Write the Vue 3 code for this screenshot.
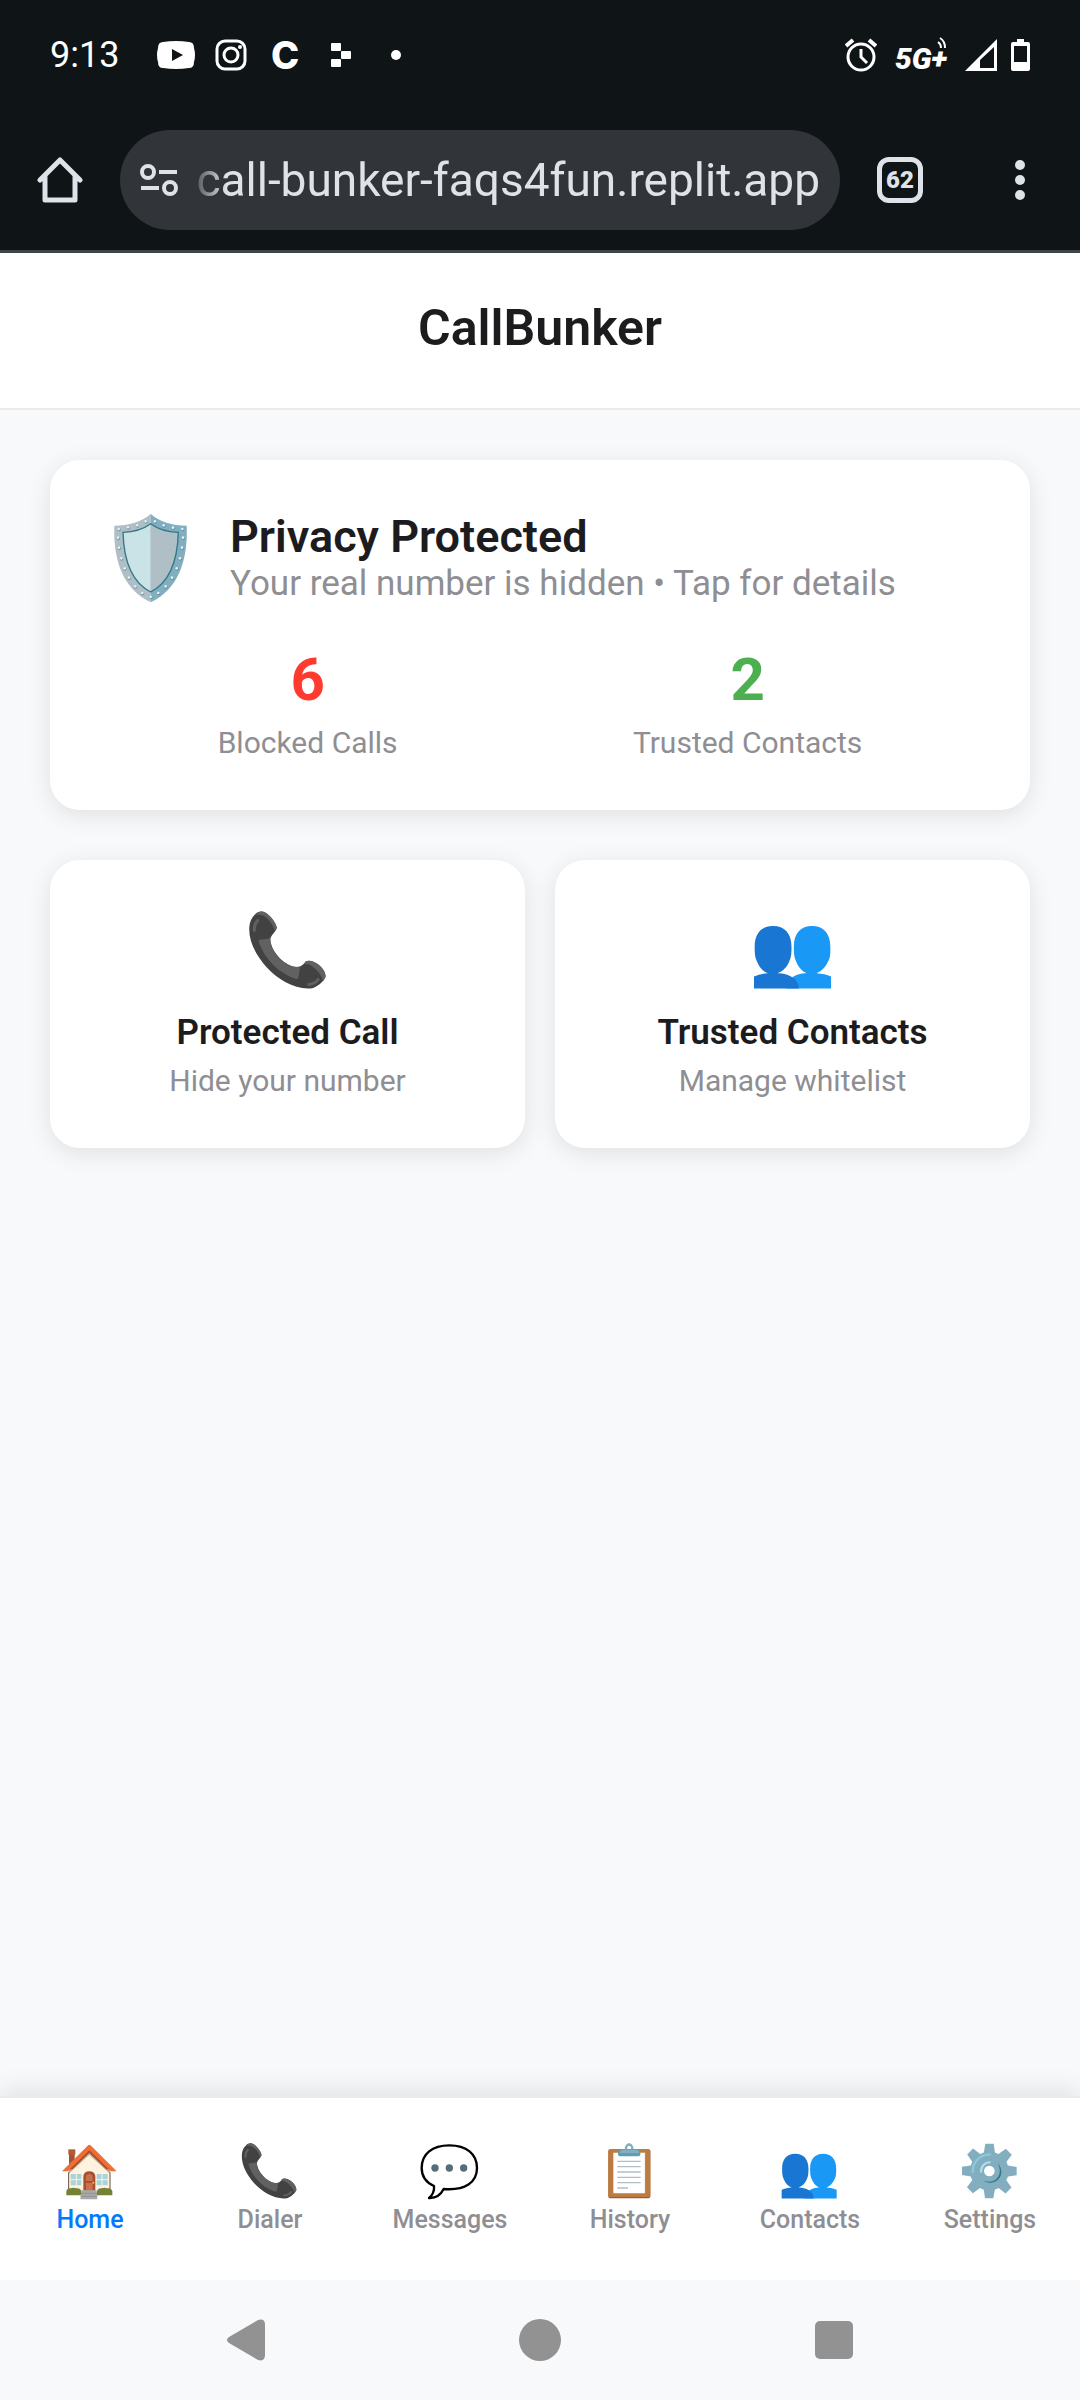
<script setup>
const actions = [
  { icon: 'phone', box: '147 93 232 234', title: 'Protected Call', note: 'Hide your number' },
  { icon: 'people', box: '162 93 232 234', title: 'Trusted Contacts', note: 'Manage whitelist' },
]

const tabs = [
  { icon: 'house', box: '179 182 180 180', label: 'Home', active: true },
  { icon: 'phone', box: '140 84 253 253', label: 'Dialer' },
  { icon: 'bubble', box: '179 182 180 180', label: 'Messages' },
  { icon: 'clipboard', box: '719 182 180 180', label: 'History' },
  { icon: 'people', box: '155 84 253 253', label: 'Contacts' },
  { icon: 'gear', box: '719 182 180 180', label: 'Settings' },
]

const rivets = [
  [195, 120], [170, 132], [142, 138], [114, 143], [112, 169], [115, 199], [122, 231], [132, 261],
  [145, 289], [164, 315], [185, 335], [210, 347], [223, 120], [249, 132], [277, 139], [305, 143],
  [307, 169], [304, 199], [298, 231], [288, 261], [274, 289], [255, 315], [233, 335],
]
</script>

<template>
  <div class="screen">
    <svg class="defs" aria-hidden="true">
      <symbol id="phone" overflow="visible">
        <path fill="#424242" d="M165 103C172 94 184 91 195 97C212 106 228 128 231 143C228 155 213 165 211 178C214 215 250 252 285 262C300 262 308 258 318 245C328 239 340 244 352 251C368 262 380 280 377 293C372 305 352 322 338 325C290 332 235 300 200 262C165 222 145 180 148 140C149 125 155 112 165 103Z" />
        <path fill="#616161" d="M172 99C180 92 190 92 200 99C215 110 229 130 231 143L225 154C221 136 206 114 190 107C184 103 178 104 168 104ZM318 244C330 239 345 246 358 256C372 267 380 282 377 292L370 303C366 285 347 264 332 256C326 252 320 252 312 252ZM175 180C190 176 203 178 211 173C210 215 250 262 302 262C296 275 300 288 293 298C240 285 190 235 175 180Z" />
        <path fill="none" stroke="#616161" stroke-width="9" stroke-linecap="round" d="M163 151C162 139 166 129 173 121M327 314C339 313 349 308 355 299" />
      </symbol>
      <symbol id="people" overflow="visible">
        <path fill="#1a98f5" d="M337 138C371 138 392 160 392 200C392 215 393 232 385 245C378 262 364 275 351 280C367 281 382 284 394 290V326H258C258 297 290 280 320 280C308 275 295 262 289 245C282 232 282 215 282 200C282 160 303 138 337 138Z" />
        <path fill="#1976d2" d="M219 138C254 138 275 160 275 200C275 215 275 232 268 245C262 262 248 275 233 280C265 280 297 296 297 326H162V290C174 284 189 281 204 280C190 275 177 262 171 245C164 232 164 215 164 200C164 160 184 138 219 138Z" />
      </symbol>
      <symbol id="house" overflow="visible">
        <path fill="#a4522f" d="M206 212H223V250L206 262Z" />
        <path fill="#b55a35" d="M204 207H225V223H204Z" />
        <path fill="#fff3e0" d="M267 212L329 272V330H205V272Z" />
        <path fill="#bfa68b" d="M267 209L205 268V280L267 223L329 280V268Z" />
        <path fill="none" stroke="#6d4c41" stroke-width="3" d="M205 276V330M329 276V330" />
        <path fill="#9e4f2e" d="M267 207L205 267H216L267 217L318 267H329Z" />
        <path fill="#f06d33" d="M262 196Q267 191 272 196L349 273H331L267 210L203 273H185Z" />
        <path fill="#a8d3d8" d="M211 281H243V315H211ZM289 281H322V315H289Z" />
        <path fill="none" stroke="#fff3e0" stroke-width="3" d="M228 280V316M210 298H244M305 280V316M288 298H323" />
        <path fill="#a84f32" d="M249 331V287Q251 273 267 273Q283 273 285 287V331Z" />
        <path fill="#c9704e" d="M257 302V289Q258 281 267 281Q276 281 277 289V302ZM257 308H277V329H257Z" />
        <circle cx="279" cy="307" r="3" fill="#fbc02d" />
        <path fill="#748236" d="M198 345V333Q200 323 211 324Q220 321 228 324Q240 322 243 333V345ZM290 345V333Q293 323 304 324Q312 321 321 324Q333 322 336 333V345Z" />
        <path fill="#a9a9a9" d="M243 330H289L291 357H240Z" />
        <path fill="none" stroke="#858585" stroke-width="2" d="M242 339H290M241 348H291" />
      </symbol>
      <symbol id="bubble" overflow="visible">
        <path fill="#fff" stroke="#000" stroke-width="7" stroke-linejoin="round" d="M267 195C318 195 350 220 350 263C350 306 315 331 250 326C243 340 228 354 206 353C216 346 223 331 221 317C196 306 184 288 184 263C184 220 216 195 267 195Z" />
        <g fill="#546e7a"><circle cx="224" cy="263" r="11" /><circle cx="267" cy="263" r="11" /><circle cx="310" cy="263" r="11" /></g>
      </symbol>
      <symbol id="clipboard" overflow="visible">
        <rect x="744" y="207" width="126" height="147" rx="6" fill="#a05a36" />
        <rect x="744" y="207" width="126" height="143" rx="6" fill="#bd7b40" />
        <path fill="#fff" d="M759 217H854V339H759Z" />
        <path fill="none" stroke="#dfe5e8" stroke-width="2" d="M853 217V338" />
        <path fill="none" stroke="#b0bec5" stroke-width="4" d="M771 243H841M771 259H841M771 275H841M771 291H841M771 307H841M771 323H803" />
        <path fill="#82aec0" fill-rule="evenodd" d="M793 209C793 182 820 182 820 209ZM806 197A6 6 0 1 0 807 197Z" />
        <path fill="#5f9db2" d="M773 216Q774 207 785 207H828Q839 207 840 216V223Q839 228 833 228H780Q774 228 773 223Z" />
        <path fill="#82aec0" d="M779 214Q781 208 788 208H826Q834 208 836 214V218H779Z" />
      </symbol>
      <symbol id="gear" overflow="visible">
        <g fill="#82aec0">
          <path v-for="n in 8" :key="n" :transform="`rotate(${n * 45} 807 272)`" d="M789 225L795 190H820L825 225Z" />
        </g>
        <circle cx="807" cy="272" r="37" fill="none" stroke="#82aec0" stroke-width="42" />
        <path fill="none" stroke="#8cc8dc" stroke-width="7" stroke-linecap="round" d="M757 275C757 244 780 222 809 222" />
        <path fill="none" stroke="#b3e1eb" stroke-width="6" stroke-linecap="round" d="M782 274C782 258 793 246 808 246" />
        <path fill="#2f7889" d="M832 249C847 264 847 288 831 300C819 310 800 309 791 301C804 307 820 304 829 295C841 284 841 264 832 249Z" />
      </symbol>
    </svg>

    <header class="device">
      <div class="status">
        <div class="status-left">
          <time class="clock">9:13</time>
          <svg width="38" height="28" viewBox="0 0 38 28"><path fill="#fff" fill-rule="evenodd" d="M6 1Q19-1 32 1Q37 1 37 7Q39 14 37 21Q37 27 32 27Q19 29 6 27Q1 27 1 21Q-1 14 1 7Q1 1 6 1ZM15 8V20L26 14Z" /></svg>
          <svg width="32" height="32" viewBox="0 0 32 32" fill="none" stroke="#fff" stroke-width="3"><rect x="2" y="2" width="28" height="28" rx="8" /><circle cx="16" cy="16" r="7" /><circle cx="25" cy="8" r="2" fill="#fff" stroke="none" /></svg>
          <span class="app-mark">C</span>
          <svg width="20" height="26" viewBox="0 0 20 26" fill="#fff"><rect width="10" height="8" y="1" rx="1" /><rect x="10" y="9" width="10" height="8" rx="1" /><rect y="17" width="10" height="8" rx="1" /></svg>
          <i class="more-dot"></i>
        </div>
        <div class="status-right">
          <svg width="32" height="34" viewBox="0 0 32 34" fill="none" stroke="#fff"><circle cx="16" cy="19" r="13" stroke-width="3" /><path stroke-width="3" d="M16 11V19L22 25" /><path stroke-width="4" d="M1 8L8 2M31 8L24 2" /></svg>
          <span class="network">5G+
            <svg class="waves" width="10" height="12" viewBox="0 0 10 12" fill="none" stroke="#fff" stroke-width="2"><path d="M3 1Q8 4 8 11M1 5Q4 7 4 11" /></svg>
          </span>
          <svg width="32" height="32" viewBox="0 0 32 32"><path fill="#fff" fill-rule="evenodd" d="M32 0V32H0ZM29 8L15 21V29H29Z" /></svg>
          <svg width="19" height="34" viewBox="0 0 19 34"><path fill="#fff" fill-rule="evenodd" d="M6 1H13V4H17Q19 4 19 6V31Q19 33 17 33H2Q0 33 0 31V6Q0 4 2 4H6ZM3 8V24H16V8Z" /></svg>
        </div>
      </div>

      <div class="toolbar">
        <button class="icon-button" aria-label="Home page">
          <svg width="46" height="46" viewBox="0 0 46 46" fill="none" stroke="#dfe2e8" stroke-width="5" stroke-linejoin="round" stroke-linecap="round"><path d="M3 23L23 3L43 23M8 20V43H38V20" /></svg>
        </button>
        <div class="address">
          <svg width="38" height="32" viewBox="0 0 38 32" fill="none" stroke="#dfe2e8" stroke-width="4"><circle cx="8" cy="8" r="6" /><circle cx="30" cy="24" r="6" /><path d="M19 8H37M1 24H19" /></svg>
          <input class="url" aria-label="Address" value="call-bunker-faqs4fun.replit.app" readonly>
        </div>
        <button class="tab-count" aria-label="Open tabs">62</button>
        <button class="icon-button menu" aria-label="Menu">
          <svg width="10" height="40" viewBox="0 0 10 40" fill="#dfe2e8"><circle cx="5" cy="5" r="5" /><circle cx="5" cy="20" r="5" /><circle cx="5" cy="35" r="5" /></svg>
        </button>
      </div>
    </header>

    <div class="title-bar"><h1>CallBunker</h1></div>

    <main class="content">
      <button class="card privacy">
        <span class="privacy-head">
          <span class="shield">
            <svg width="73" height="90" viewBox="100 96 219 268">
              <path fill="#b0bec5" d="M210 97C184 122 145 132 101 133C98 220 118 320 210 363Z" />
              <path fill="#82aec0" d="M210 97C236 122 275 132 318 133C322 220 302 320 210 363Z" />
              <g fill="#2f7889" opacity=".55"><circle v-for="(r, i) in rivets" :key="i" :cx="r[0] + 1" :cy="r[1] + 2" r="5" /></g>
              <g fill="#e0f2f4"><circle v-for="(r, i) in rivets" :key="i" :cx="r[0]" :cy="r[1]" r="4" /></g>
              <path fill="#c9e3e6" d="M210 127C187 144 160 152 127 153C129 227 147 300 210 332Z" />
              <path fill="#b0bec5" d="M210 127C233 144 260 152 293 153C291 227 273 300 210 332Z" />
              <path fill="none" stroke="#2f7889" stroke-width="4" d="M210 127C187 144 160 152 127 153C129 227 147 300 210 332C273 300 291 227 293 153C260 152 233 144 210 127Z" />
            </svg>
          </span>
          <span class="privacy-text">
            <strong>Privacy Protected</strong>
            <span>Your real number is hidden • Tap for details</span>
          </span>
        </span>
        <span class="stats">
          <span class="stat"><b class="blocked">6</b><span>Blocked Calls</span></span>
          <span class="stat"><b class="trusted">2</b><span>Trusted Contacts</span></span>
        </span>
      </button>

      <div class="actions">
        <button v-for="a in actions" :key="a.title" class="card action">
          <svg width="77" height="80" :viewBox="a.box"><use :href="'#' + a.icon" /></svg>
          <strong>{{ a.title }}</strong>
          <span>{{ a.note }}</span>
        </button>
      </div>
    </main>

    <nav class="tabs">
      <a v-for="t in tabs" :key="t.label" href="#" :class="{ active: t.active }">
        <svg width="60" height="60" :viewBox="t.box"><use :href="'#' + t.icon" /></svg>
        <span>{{ t.label }}</span>
      </a>
    </nav>

    <footer class="system">
      <button aria-label="Back"><svg width="38" height="42" viewBox="0 0 38 42"><path fill="#929292" d="M2 18L31 1Q38-1 38 6V36Q38 43 31 41L2 24Q-2 21 2 18Z" /></svg></button>
      <button aria-label="Home"><svg width="42" height="42" viewBox="0 0 42 42"><circle cx="21" cy="21" r="21" fill="#929292" /></svg></button>
      <button aria-label="Recents"><svg width="38" height="38" viewBox="0 0 38 38"><rect width="38" height="38" rx="5" fill="#929292" /></svg></button>
    </footer>
  </div>
</template>

<style>
body {
  background: #f8f9fb;
}
</style>

<style scoped>
.screen {
  display: flex;
  flex-direction: column;
  min-height: 100vh;
  font-family: Roboto, "Liberation Sans", sans-serif;
  color: #1c1c1e;
  background: #f8f9fb;
}
.defs {
  position: absolute;
  width: 0;
  height: 0;
}
svg {
  display: block;
  flex: none;
}
button {
  padding: 0;
  border: 0;
  background: none;
  font: inherit;
  color: inherit;
}

.device {
  background: #0f1416;
  border-bottom: 3px solid #40454a;
}
.status {
  display: flex;
  align-items: center;
  justify-content: space-between;
  height: 110px;
  padding: 0 50px;
  color: #fff;
}
.status-left {
  display: flex;
  align-items: center;
}
.clock {
  width: 107px;
  font-size: 36px;
  line-height: 44px;
}
.status-left svg {
  margin-right: 20px;
}
.app-mark {
  width: 32px;
  margin: 0 28px 0 4px;
  font-family: Inter, sans-serif;
  font-size: 38px;
  font-weight: 800;
  line-height: 44px;
}
.more-dot {
  width: 10px;
  height: 10px;
  margin-left: 20px;
  border-radius: 50%;
  background: #fff;
}
.status-right {
  display: flex;
  align-items: center;
  gap: 14px;
}
.network {
  position: relative;
  width: 60px;
  padding-top: 8px;
  font-size: 30px;
  font-style: italic;
  font-weight: 900;
  line-height: 32px;
  text-align: center;
}
.waves {
  position: absolute;
  top: 2px;
  right: 4px;
}

.toolbar {
  display: flex;
  align-items: center;
  gap: 37px;
  padding: 20px 55px 20px 37px;
}
.address {
  display: flex;
  flex: 1;
  min-width: 0;
  align-items: center;
  gap: 10px;
  height: 100px;
  padding: 0 20px;
  border-radius: 50px;
  background: #313438;
}
.url {
  flex: 1;
  min-width: 0;
  padding: 0;
  border: 0;
  background: none;
  font-family: Roboto, sans-serif;
  font-size: 46px;
  line-height: 60px;
  text-align: right;
  color: #dfe2e8;
  mask-image: linear-gradient(to right, transparent, #000 38px);
}
.tab-count {
  box-sizing: border-box;
  width: 46px;
  height: 46px;
  border: 5px solid #dfe2e8;
  border-radius: 12px;
  font-size: 24px;
  font-weight: 900;
  line-height: 36px;
  text-align: center;
  color: #dfe2e8;
}
.menu {
  margin-left: 55px;
}

.title-bar {
  padding: 48px 50px 52px;
  border-bottom: 2px solid #ebebec;
  background: #fff;
  text-align: center;
}
h1 {
  margin: 0;
  font-size: 50px;
  font-weight: 600;
  line-height: 55px;
}

.content {
  display: flex;
  flex: 1;
  flex-direction: column;
  gap: 50px;
  padding: 50px;
}
.card {
  display: flex;
  flex-direction: column;
  padding: 50px;
  border-radius: 30px;
  background: #fff;
  box-shadow: 0 5px 25px rgba(0, 0, 0, 0.1);
}
.privacy {
  gap: 40px;
}
.privacy-head {
  display: flex;
  align-items: center;
  gap: 30px;
  text-align: left;
}
.shield {
  display: flex;
  justify-content: center;
  width: 100px;
}
.privacy-text {
  display: flex;
  flex: 1;
  flex-direction: column;
  font-size: 35px;
  line-height: 42px;
  color: #8e8e93;
}
.privacy-text strong {
  font-size: 45px;
  font-weight: 600;
  line-height: 53px;
  color: #1c1c1e;
}
.stats {
  display: flex;
  justify-content: space-around;
}
.stat {
  display: flex;
  flex-direction: column;
  gap: 10px;
  align-items: center;
  font-size: 30px;
  line-height: 35px;
  color: #8e8e93;
}
.stat b {
  font-size: 60px;
  font-weight: 700;
  line-height: 70px;
}
.blocked {
  color: #ff3b30;
}
.trusted {
  color: #4caf50;
}
.actions {
  display: grid;
  grid-template-columns: 1fr 1fr;
  gap: 30px;
}
.action {
  align-items: center;
  font-size: 30px;
  line-height: 35px;
  color: #8e8e93;
}
.action strong {
  margin: 22px 0 10px;
  font-size: 35px;
  font-weight: 600;
  line-height: 41px;
  color: #1c1c1e;
}

.tabs {
  display: grid;
  grid-template-columns: repeat(6, 1fr);
  padding: 43px 0 46px;
  border-top: 2px solid #ebebec;
  background: #fff;
  box-shadow: 0 -5px 25px rgba(0, 0, 0, 0.1);
}
.tabs a {
  display: flex;
  flex-direction: column;
  gap: 4px;
  align-items: center;
  font-size: 25px;
  font-weight: 500;
  line-height: 29px;
  color: #8e8e93;
  text-decoration: none;
}
.tabs a.active {
  color: #007aff;
}

.system {
  position: relative;
  display: grid;
  grid-template-columns: repeat(3, 1fr);
  height: 120px;
  padding: 0 99px;
  background: #f8f9fb;
}
.system button {
  display: flex;
  align-items: center;
  justify-content: center;
}
</style>
